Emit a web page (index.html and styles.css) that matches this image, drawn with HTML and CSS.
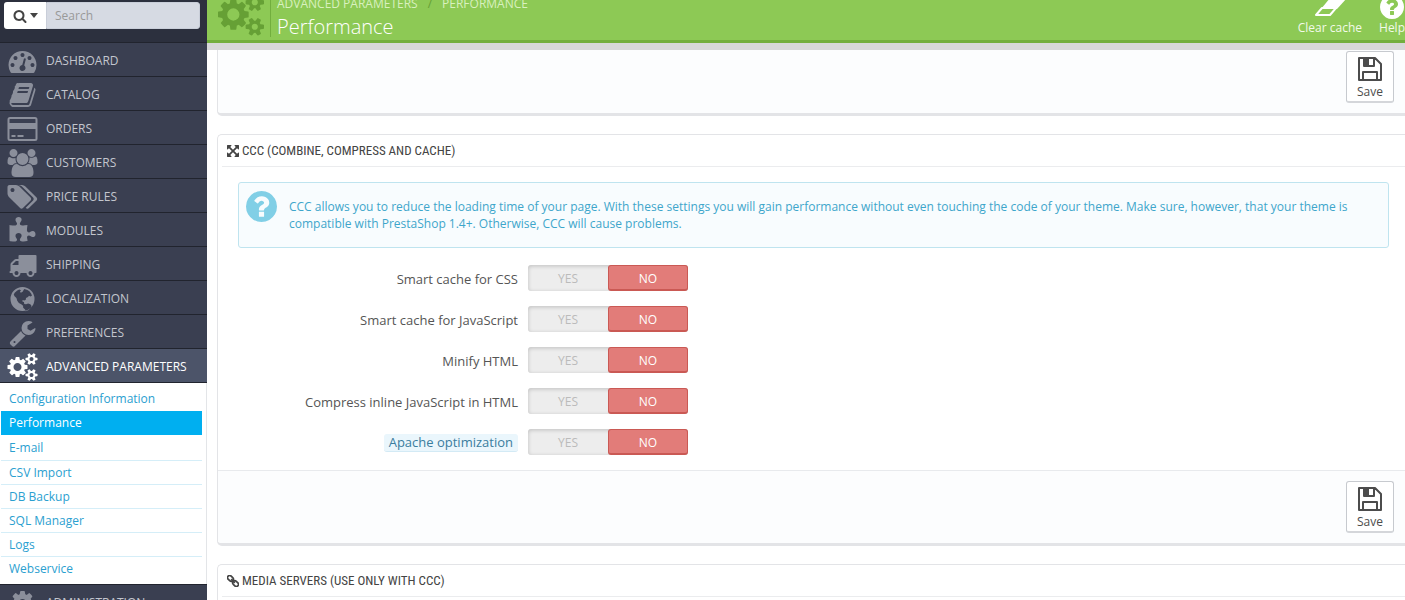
FILE: index.html
```html
<!DOCTYPE html>
<html lang="en">
<head>
<meta charset="utf-8">
<title>Performance</title>
<link rel="stylesheet" href="styles.css">
</head>
<body>
<svg class="defs" aria-hidden="true">
  <symbol id="i-search" viewBox="0 0 1792 1792"><path d="M1216 832q0-185-131.500-316.500t-316.500-131.500-316.500 131.500-131.500 316.500 131.500 316.500 316.500 131.500 316.500-131.500 131.500-316.500zm512 832q0 52-38 90t-90 38q-54 0-90-38l-343-342q-179 124-399 124-143 0-273.500-55.500t-225-150-150-225-55.500-273.500 55.500-273.500 150-225 225-150 273.500-55.500 273.500 55.500 225 150 150 225 55.500 273.500q0 220-124 399l343 343q37 37 37 90z"/></symbol>
  <symbol id="i-dash" viewBox="0 0 1792 1792"><path d="M384 1152q0-53-37.500-90.500t-90.500-37.500-90.500 37.500-37.500 90.500 37.500 90.500 90.500 37.500 90.500-37.500 37.500-90.500zm192-448q0-53-37.500-90.500t-90.500-37.500-90.500 37.500-37.500 90.500 37.500 90.500 90.500 37.500 90.500-37.500 37.500-90.500zm428 481l101-382q6-26-7.500-48.500t-38.500-29.500-48 6.500-30 39.500l-101 382q-60 5-107 43.500t-63 98.500q-20 77 20 146t117 89 146-20 89-117q16-60-6-117t-72-91zm660-33q0-53-37.500-90.500t-90.500-37.500-90.500 37.500-37.500 90.500 37.500 90.500 90.500 37.500 90.500-37.500 37.500-90.500zm-640-640q0-53-37.500-90.500t-90.500-37.500-90.500 37.500-37.500 90.500 37.500 90.500 90.500 37.500 90.500-37.500 37.500-90.500zm448 192q0-53-37.500-90.500t-90.500-37.500-90.500 37.500-37.500 90.500 37.500 90.500 90.500 37.500 90.500-37.500 37.500-90.500zm320 448q0 261-141 483-19 29-54 29h-1402q-35 0-54-29-141-221-141-483 0-182 71-348t191-286 286-191 348-71 348 71 286 191 191 286 71 348z"/></symbol>
  <symbol id="i-book" viewBox="0 0 1792 1792"><path d="M1703 478q40 57 18 129l-275 906q-19 64-76.500 107.500t-122.500 43.500h-923q-77 0-148.500-53.500t-99.500-131.500q-24-67-2-127 0-4 3-27t4-37q1-8-3-21.500t-3-19.500q2-11 8-21t16.500-23.500 16.500-23.500q23-38 45-91.500t30-91.500q3-10 .5-30t-.5-28q3-11 17-28t17-23q21-36 42-92t25-90q1-9-2.500-32t.5-28q4-13 22-30.500t22-22.500q19-26 42.500-84.500t27.500-96.500q1-8-3-25.500t-2-26.500q2-8 9-18t18-23 17-21q8-12 16.500-30.500t15-35 16-36 19.500-32 26.500-23.500 36-11.500 47.500 5.500l-1 3q38-9 51-9h761q74 0 114 56t18 130l-274 906q-36 119-71.500 153.500t-128.500 34.500h-869q-27 0-38 15-11 16-1 43 24 70 144 70h923q29 0 56-15.500t35-41.500l300-987q7-22 5-57 38 15 59 43zm-1064 2q-4 13 2 22.500t20 9.500h608q13 0 25.500-9.500t16.500-22.500l21-64q4-13-2-22.500t-20-9.500h-608q-13 0-25.500 9.500t-16.500 22.500zm-83 256q-4 13 2 22.500t20 9.500h608q13 0 25.500-9.500t16.500-22.500l21-64q4-13-2-22.500t-20-9.500h-608q-13 0-25.500 9.500t-16.500 22.500z"/></symbol>
  <symbol id="i-card" viewBox="0 0 1920 1792"><path fill-rule="evenodd" d="M160 128h1600q160 0 160 160v1216q0 160-160 160h-1600q-160 0-160-160v-1216q0-160 160-160zm0 128q-32 0-32 32v224h1664v-224q0-32-32-32zm-32 640v608q0 32 32 32h1600q32 0 32-32v-608zm128 384h256v128h-256zm384 0h384v128h-384z"/></symbol>
  <symbol id="i-users" viewBox="0 0 1920 1792"><path d="M593 896q-162 5-265 128h-134q-82 0-138-40.500t-56-118.500q0-353 124-353 6 0 43.500 21t97.500 42.500 119 21.500q67 0 133-23-5 37-5 66 0 159 81 294zm1071 637q0 120-73 189.500t-194 69.500h-874q-121 0-194-69.500t-73-189.500q0-53 3.500-103.500t14-109 26.500-108.500 43-97.500 62-81 85.500-53.500 111.500-20q10 0 43 21.500t73 48 107 48 135 21.500 135-21.500 107-48 73-48 43-21.500q61 0 111.500 20t85.500 53.500 62 81 43 97.500 26.500 108.500 14 109 3.500 103.500zm-1024-1277q0 106-75 181t-181 75-181-75-75-181 75-181 181-75 181 75 75 181zm704 384q0 159-112.500 271.500t-271.500 112.500-271.500-112.500-112.500-271.500 112.500-271.500 271.500-112.500 271.500 112.500 112.500 271.500zm576 225q0 78-56 118.500t-138 40.500h-134q-103-123-265-128 81-135 81-294 0-29-5-66 66 23 133 23 59 0 119-21.500t97.500-42.500 43.500-21q124 0 124 353zm-128-609q0 106-75 181t-181 75-181-75-75-181 75-181 181-75 181 75 75 181z"/></symbol>
  <symbol id="i-tags" viewBox="0 0 1920 1792"><path d="M448 448q0-53-37.500-90.500t-90.500-37.500-90.500 37.500-37.500 90.500 37.500 90.500 90.500 37.500 90.500-37.500 37.500-90.500zm1067 576q0 53-37 90l-491 492q-39 37-91 37-53 0-90-37l-715-716q-38-37-64.500-101t-26.500-117v-416q0-52 38-90t90-38h416q53 0 117 26.500t102 64.500l715 714q37 39 37 91zm384 0q0 53-37 90l-491 492q-39 37-91 37-36 0-59-14t-53-45l470-470q37-37 37-90 0-52-37-91l-715-714q-38-38-102-64.500t-117-26.500h224q53 0 117 26.500t102 64.500l715 714q37 39 37 91z"/></symbol>
  <symbol id="i-puzzle" viewBox="0 0 1792 1792"><path d="M1728 1098q0 81-44.500 135t-123.500 54q-41 0-77.500-17.500t-59-38-56.500-38-71-17.500q-110 0-110 124 0 39 16 115t15 115v5q-22 0-33 1-34 3-97.500 11.500t-115.500 13.500-98 5q-61 0-103-26.500t-42-83.500q0-37 17.500-71t38-56.500 38-59 17.500-77.500q0-79-54-123.500t-135-44.500q-84 0-143 45.500t-59 127.500q0 43 15 83t33.500 64.500 33.500 53 15 50.500q0 45-46 89-37 35-117 35-95 0-245-24-9-2-27.500-4t-27.500-4l-13-2q-1 0-3-1-2 0-2-1v-1024q2 1 17.500 3.500t34 5 21.500 3.500q150 24 245 24 80 0 117-35 46-44 46-89 0-22-15-50.500t-33.500-53-33.500-64.500-15-83q0-82 59-127.500t144-45.500q80 0 134 44.500t54 123.500q0 41-17.500 77.500t-38 59-38 56.500-17.500 71q0 57 42 83.500t103 26.500q64 0 180-15t163-17v2q-1 2-3.500 17.500t-5 34-3.500 21.500q-24 150-24 245 0 80 35 117 44 46 89 46 22 0 50.500-15t53-33.500 64.500-33.500 83-15q82 0 127.500 59t45.500 143z"/></symbol>
  <symbol id="i-truck" viewBox="0 0 1792 1792"><path d="M640 1408q0-52-38-90t-90-38-90 38-38 90 38 90 90 38 90-38 38-90zm-384-512h384v-256h-158q-13 0-22 9l-195 195q-9 9-9 22v30zm1280 512q0-52-38-90t-90-38-90 38-38 90 38 90 90 38 90-38 38-90zm256-1088v1024q0 15-4 26.500t-13.500 18.500-16.500 11.500-23.500 6-22.500 2-25.500 0-22.500-.5q0 106-75 181t-181 75-181-75-75-181h-384q0 106-75 181t-181 75-181-75-75-181h-64q-3 0-22.500.5t-25.500 0-22.500-2-23.500-6-16.500-11.500-13.500-18.500-4-26.500q0-26 19-45t45-19v-320q0-8-.5-35t0-38 2.500-34.500 6.500-37 14-30.500 22.500-30l198-198q19-19 50.500-32t58.500-13h160v-192q0-26 19-45t45-19h1024q26 0 45 19t19 45z"/></symbol>
  <symbol id="i-globe" viewBox="0 0 24 24"><path fill-rule="evenodd" d="M12 1.700a10.300 10.300 0 1 0 0 20.600 10.300 10.300 0 0 0 0-20.600zM13.500 3.400l2.700.8 1.700 1.200 1.600 2 .6 1.800-1.300.6-1.200-.5-.9 1-1.700.8-.2 1.500-1.200.6-1.500-.3-.2 1.200 1.300.5.3 1.700 1.600.2 1.700-.7 1.900.8 1.100 1.300-.9 1.900-2 1.800-2.200.9-.5-1.600-1.600-1.400-.1-1.800-1.600-1.300-2-1-1.400-1.900-.7-2.300-1.600-1.600-.7-1.500.8-1.400 2.200-1.900 1.700-.9 1.500.7-.9 1.200.8.800 1.500-.8.600-1.100z"/></symbol>
  <symbol id="i-wrench" viewBox="0 0 1792 1792"><path d="M448 1472q0-26-19-45t-45-19-45 19-19 45 19 45 45 19 45-19 19-45zm644-420l-682 682q-37 37-90 37-52 0-91-37l-106-108q-38-36-38-90 0-53 38-91l681-681q39 98 114.500 173.500t173.500 114.500zm634-435q0 39-23 106-47 134-164.500 217.500t-258.500 83.500q-185 0-316.500-131.500t-131.500-316.500 131.500-316.500 316.500-131.500q58 0 121.500 16.500t107.500 46.500q16 11 16 28t-16 28l-293 169v224l193 107q5-3 79-48.500t135.500-81 70.500-35.500q15 0 23.500 10t8.500 25z"/></symbol>
  <symbol id="i-cogs" viewBox="0 0 1920 1792"><path d="M896 896q0-106-75-181t-181-75-181 75-75 181 75 181 181 75 181-75 75-181zm768 512q0-52-38-90t-90-38-90 38-38 90q0 53 37.500 90.500t90.500 37.500 90.500-37.500 37.500-90.500zm0-1024q0-52-38-90t-90-38-90 38-38 90q0 53 37.500 90.500t90.500 37.500 90.500-37.500 37.500-90.500zm-384 421v185q0 10-7 19.500t-16 10.500l-155 24q-11 35-32 76 34 48 90 115 7 11 7 20 0 12-7 19-23 30-82.500 89.500t-78.500 59.500q-11 0-21-7l-115-90q-37 19-77 31-11 108-23 155-7 24-30 24h-186q-11 0-20-7.500t-10-17.500l-23-153q-34-10-75-31l-118 89q-7 7-20 7-11 0-21-8-144-133-144-160 0-9 7-19 10-14 41-53t47-61q-23-44-35-82l-152-24q-10-1-17-9.500t-7-19.500v-185q0-10 7-19.500t16-10.500l155-24q11-35 32-76-34-48-90-115-7-11-7-20 0-12 7-20 22-30 82-89t79-59q11 0 21 7l115 90q34-18 77-32 11-108 23-154 7-24 30-24h186q11 0 20 7.500t10 17.500l23 153q34 10 75 31l118-89q8-7 20-7 11 0 21 8 144 133 144 160 0 8-7 19-12 16-42 54t-45 60q23 48 34 82l152 23q10 2 17 10.500t7 19.500zm640 533v140q0 16-149 31-12 27-30 52 51 113 51 138 0 4-4 7-122 71-124 71-8 0-46-47t-52-68q-20 2-30 2t-30-2q-14 21-52 68t-46 47q-2 0-124-71-4-3-4-7 0-25 51-138-18-25-30-52-149-15-149-31v-140q0-16 149-31 13-29 30-52-51-113-51-138 0-4 4-7 4-2 35-20t59-34 30-16q8 0 46 46.500t52 67.500q20-2 30-2t30 2q51-71 92-112l6-2q4 0 124 70 4 3 4 7 0 25-51 138 17 23 30 52 149 15 149 31zm0-1024v140q0 16-149 31-12 27-30 52 51 113 51 138 0 4-4 7-122 71-124 71-8 0-46-47t-52-68q-20 2-30 2t-30-2q-14 21-52 68t-46 47q-2 0-124-71-4-3-4-7 0-25 51-138-18-25-30-52-149-15-149-31v-140q0-16 149-31 13-29 30-52-51-113-51-138 0-4 4-7 4-2 35-20t59-34 30-16q8 0 46 46.500t52 67.500q20-2 30-2t30 2q51-71 92-112l6-2q4 0 124 70 4 3 4 7 0 25-51 138 17 23 30 52 149 15 149 31z"/></symbol>
  <symbol id="i-cog" viewBox="0 0 1792 1792"><path d="M1152 896q0-106-75-181t-181-75-181 75-75 181 75 181 181 75 181-75 75-181zm512-109v222q0 12-8 23t-20 13l-185 28q-19 54-39 91 35 50 107 138 10 12 10 25t-9 23q-27 37-99 108t-94 71q-12 0-26-9l-138-108q-44 23-91 38-16 136-29 186-7 28-36 28h-222q-14 0-24.500-8.500t-11.500-21.500l-28-184q-49-16-90-37l-141 107q-10 9-25 9-14 0-25-11-126-114-165-168-7-10-7-23 0-12 8-23 15-21 51-66.500t54-70.500q-27-50-41-99l-183-27q-13-2-21-12.500t-8-23.500v-222q0-12 8-23t19-13l186-28q14-46 39-92-40-57-107-138-10-12-10-24 0-10 9-23 26-36 98.500-107.500t94.500-71.500q13 0 26 10l138 107q44-23 91-38 16-136 29-186 7-28 36-28h222q14 0 24.500 8.500t11.500 21.500l28 184q49 16 90 37l142-107q9-9 24-9 13 0 25 10 129 119 165 170 7 8 7 22 0 12-8 23-15 21-51 66.500t-54 70.500q26 50 41 98l183 28q13 2 21 12.500t8 23.500z"/></symbol>
  <symbol id="i-help" viewBox="128 128 1536 1536"><path d="M1024 1376v-192q0-14-9-23t-23-9h-192q-14 0-23 9t-9 23v192q0 14 9 23t23 9h192q14 0 23-9t9-23zm256-672q0-88-55.500-163t-138.500-116-170-41q-243 0-371 213-15 24 8 42l132 100q7 6 19 6 16 0 25-12 53-68 86-92 34-24 86-24 48 0 85.500 26t37.500 59q0 38-20 61t-68 45q-63 28-115.500 86.500t-52.500 125.500v36q0 14 9 23t23 9h192q14 0 23-9t9-23q0-19 21.500-49.500t54.500-49.500q32-18 49-28.500t46-35 44.500-48 28-60.500 12.500-81zm384 192q0 209-103 385.500t-279.500 279.500-385.500 103-385.500-103-279.500-279.500-103-385.500 103-385.500 279.500-279.500 385.500-103 385.500 103 279.500 279.500 103 385.500z"/></symbol>
  <symbol id="i-expand" viewBox="128 128 1536 1536"><path d="M1411 541l-355 355 355 355 144-144q29-31 70-14 39 17 39 59v448q0 26-19 45t-45 19h-448q-42 0-59-40-17-39 14-69l144-144-355-355-355 355 144 144q31 30 14 69-17 40-59 40h-448q-26 0-45-19t-19-45v-448q0-42 40-59 39-17 69 14l144 144 355-355-355-355-144 144q-19 19-45 19-12 0-24-5-40-17-40-59v-448q0-26 19-45t45-19h448q42 0 59 40 17 39-14 69l-144 144 355 355 355-355-144-144q-31-30-14-69 17-40 59-40h448q26 0 45 19t19 45v448q0 42-39 59-13 5-25 5-26 0-45-19z"/></symbol>
  <symbol id="i-link" viewBox="0 0 14 14"><g fill="none" stroke="currentColor" stroke-width="2" transform="rotate(45 7 7)"><rect x="-1" y="4.500" width="7.500" height="5" rx="2.500"/><rect x="7.500" y="4.500" width="7.500" height="5" rx="2.500"/><path d="M4 7h6"/></g></symbol>
  <symbol id="i-save" viewBox="0 0 24 24"><path fill="none" stroke="currentColor" stroke-width="2" stroke-linejoin="round" d="M1 1h16l6 6v16H1zM6 1v8h10V1M5 23v-8h14v8"/><path d="M5 1h6v8H5z"/></symbol>
  <symbol id="i-eraser" viewBox="0 0 36 26"><path fill="none" stroke="currentColor" stroke-width="2" stroke-linejoin="round" d="M4 24l6-7h14l-6 7z"/><path d="M9 18L23 1h12v6L25 18z"/></symbol>
</svg>
<div class="app">
  <aside class="sidebar">
    <form class="search">
      <button class="search-type" type="button" aria-label="Search scope"><svg class="glass"><use href="#i-search"/></svg><span class="caret"></span></button>
      <input class="search-input" type="search" placeholder="Search" aria-label="Search">
    </form>
    <nav class="menu">
      <a class="item" href="#"><svg class="nav-icon"><use href="#i-dash"/></svg>DASHBOARD</a>
      <a class="item" href="#"><svg class="nav-icon"><use href="#i-book"/></svg>CATALOG</a>
      <a class="item" href="#"><svg class="nav-icon"><use href="#i-card"/></svg>ORDERS</a>
      <a class="item" href="#"><svg class="nav-icon"><use href="#i-users"/></svg>CUSTOMERS</a>
      <a class="item" href="#"><svg class="nav-icon"><use href="#i-tags"/></svg>PRICE RULES</a>
      <a class="item" href="#"><svg class="nav-icon"><use href="#i-puzzle"/></svg>MODULES</a>
      <a class="item" href="#"><svg class="nav-icon"><use href="#i-truck"/></svg>SHIPPING</a>
      <a class="item" href="#"><svg class="nav-icon"><use href="#i-globe"/></svg>LOCALIZATION</a>
      <a class="item" href="#"><svg class="nav-icon"><use href="#i-wrench"/></svg>PREFERENCES</a>
      <a class="item current" href="#"><svg class="nav-icon"><use href="#i-cogs"/></svg>ADVANCED PARAMETERS</a>
      <div class="submenu">
        <a class="sub" href="#">Configuration Information</a>
        <a class="sub selected" href="#">Performance</a>
        <a class="sub" href="#">E-mail</a>
        <a class="sub" href="#">CSV Import</a>
        <a class="sub" href="#">DB Backup</a>
        <a class="sub" href="#">SQL Manager</a>
        <a class="sub" href="#">Logs</a>
        <a class="sub" href="#">Webservice</a>
      </div>
      <a class="item" href="#"><svg class="nav-icon"><use href="#i-cog"/></svg>ADMINISTRATION</a>
    </nav>
  </aside>
  <div class="page">
    <header class="header">
      <svg class="page-icon"><use href="#i-cogs"/></svg>
      <div class="titles">
        <div class="crumbs"><span>ADVANCED PARAMETERS</span><span class="slash">/</span><span>PERFORMANCE</span></div>
        <h1 class="title">Performance</h1>
      </div>
      <div class="tools">
        <a class="tool" href="#"><svg class="eraser"><use href="#i-eraser"/></svg>Clear cache</a>
        <a class="tool" href="#"><svg class="help"><use href="#i-help"/></svg>Help</a>
      </div>
    </header>
    <main class="content">
      <section class="panel panel-first">
        <div class="panel-footer"><button class="save" type="button"><svg class="save-icon"><use href="#i-save"/></svg>Save</button></div>
      </section>
      <section class="panel">
        <h2 class="panel-heading"><svg class="head-icon"><use href="#i-expand"/></svg>CCC (COMBINE, COMPRESS AND CACHE)</h2>
        <div class="panel-body">
          <div class="alert">
            <svg class="alert-icon"><use href="#i-help"/></svg>
            <p class="alert-text">CCC allows you to reduce the loading time of your page. With these settings you will gain performance without even touching the code of your theme. Make sure, however, that your theme is compatible with PrestaShop 1.4+. Otherwise, CCC will cause problems.</p>
          </div>
          <div class="row" role="radiogroup" aria-labelledby="l1">
            <span class="label" id="l1">Smart cache for CSS</span>
            <div class="switch"><input type="radio" name="css" id="css1"><label for="css1">YES</label><input type="radio" name="css" id="css0" checked><label for="css0">NO</label></div>
          </div>
          <div class="row" role="radiogroup" aria-labelledby="l2">
            <span class="label" id="l2">Smart cache for JavaScript</span>
            <div class="switch"><input type="radio" name="js" id="js1"><label for="js1">YES</label><input type="radio" name="js" id="js0" checked><label for="js0">NO</label></div>
          </div>
          <div class="row" role="radiogroup" aria-labelledby="l3">
            <span class="label" id="l3">Minify HTML</span>
            <div class="switch"><input type="radio" name="html" id="html1"><label for="html1">YES</label><input type="radio" name="html" id="html0" checked><label for="html0">NO</label></div>
          </div>
          <div class="row" role="radiogroup" aria-labelledby="l4">
            <span class="label" id="l4">Compress inline JavaScript in HTML</span>
            <div class="switch"><input type="radio" name="inline" id="inline1"><label for="inline1">YES</label><input type="radio" name="inline" id="inline0" checked><label for="inline0">NO</label></div>
          </div>
          <div class="row" role="radiogroup" aria-labelledby="l5">
            <span class="label"><span class="hint" id="l5">Apache optimization</span></span>
            <div class="switch"><input type="radio" name="apache" id="apache1"><label for="apache1">YES</label><input type="radio" name="apache" id="apache0" checked><label for="apache0">NO</label></div>
          </div>
        </div>
        <div class="panel-footer"><button class="save" type="button"><svg class="save-icon"><use href="#i-save"/></svg>Save</button></div>
      </section>
      <section class="panel">
        <h2 class="panel-heading"><svg class="head-icon"><use href="#i-link"/></svg>MEDIA SERVERS (USE ONLY WITH CCC)</h2>
        <div class="panel-body"></div>
      </section>
    </main>
  </div>
</div>
</body>
</html>
```
FILE: styles.css
```css
* { box-sizing: border-box; }

body {
  margin: 0;
  font: 12px/17px "Open Sans", sans-serif;
  color: #555;
  background: #fff;
}

a { text-decoration: none; }
svg { display: block; flex: none; fill: currentColor; }
.defs { display: none; }

.app {
  display: flex;
  height: 100vh;
  overflow: hidden;
}

/* Sidebar */
.sidebar {
  flex: none;
  width: 207px;
  background: #3a3f51;
}

.search {
  display: flex;
  height: 42px;
  padding: 2px 7px 13px 4px;
  background: #2c303e;
}

.search-type {
  display: flex;
  align-items: center;
  justify-content: center;
  gap: 3px;
  width: 42px;
  padding: 0;
  border: 0;
  border-radius: 3px 0 0 3px;
  background: #fff;
  color: #444;
}

.glass { width: 14px; height: 14px; }

.caret {
  border: 4px solid transparent;
  border-top: 5px solid #444;
  border-bottom: 0;
}

.search-input {
  flex: 1;
  min-width: 0;
  padding: 0 8px;
  border: 1px solid #c9ced9;
  border-radius: 0 3px 3px 0;
  background: #d6dae3;
  font: inherit;
}

.search-input::placeholder { color: #999; }

.item {
  display: flex;
  align-items: center;
  gap: 8px;
  height: 34px;
  padding: 2px 0 0 7px;
  border-top: 1px solid #21242e;
  color: #c3c6ce;
}

.nav-icon {
  width: 31px;
  height: 28px;
  color: #8b8f9b;
}

.current {
  height: 35px;
  border-bottom: 1px solid #21242e;
  background: #4c5469;
  color: #fff;
}

.current .nav-icon { color: #fff; }

.submenu {
  padding: 4px 4px 3px 1px;
  border-right: 1px solid #e3e5e8;
  background: #fff;
}

.sub {
  display: block;
  height: 24px;
  padding: 3px 8px;
  border-bottom: 1px solid #d5eef8;
  color: #2ba0d0;
}

.sub:first-child, .sub:last-child { border-bottom-color: transparent; }

.selected {
  margin-bottom: 1px;
  border-bottom: 0;
  background: #00aff0;
  color: #fff;
}

.selected + .sub { height: 25px; }

/* Page header */
.page {
  flex: 1;
  min-width: 0;
}

.header {
  display: flex;
  align-items: flex-end;
  height: 50px;
  overflow: hidden;
  border-bottom: 7px solid #d6d7d9;
  box-shadow: inset 0 -3px #72ae3e;
  background: #8dc955;
  color: #fff;
}

.page-icon {
  width: 46px;
  height: 43px;
  margin: 0 6px 7px 11px;
  color: #66a035;
}

.titles {
  padding-left: 6px;
  margin-bottom: 6px;
  border-left: 1px solid #72ae3e;
}

.crumbs {
  display: flex;
  gap: 10px;
  color: #d8f0bf;
}

.slash { color: #66a035; }

.title {
  margin: 0;
  padding-top: 5px;
  font-size: 20px;
  line-height: 20px;
  font-weight: 300;
}

.tools {
  display: flex;
  align-items: flex-end;
  gap: 17px;
  margin-left: auto;
  padding-bottom: 7px;
}

.tool {
  display: flex;
  flex-direction: column;
  align-items: center;
  color: #f2fae9;
}

.eraser { width: 36px; height: 26px; margin-bottom: 2px; color: #fff; }
.help { width: 24px; height: 24px; color: #fff; }

/* Panels */
.content { padding-left: 10px; }

.panel {
  margin-bottom: 18px;
  border: 1px solid #e3e4e7;
  border-width: 1px 0 3px 1px;
  border-radius: 5px 0 0 5px;
}

.panel-first {
  border-top: 0;
  border-top-left-radius: 0;
}

.panel-heading {
  display: flex;
  align-items: center;
  gap: 3px;
  height: 32px;
  margin: 0 0 0 4px;
  padding-left: 5px;
  border-bottom: 1px solid #ebecee;
  font: 400 13px/20px "Ubuntu Condensed", "Roboto Condensed", "Open Sans Condensed", sans-serif;
  color: #444;
}

.head-icon { width: 12px; height: 12px; }

.panel-body { padding: 15px 16px 15px 20px; }

.alert {
  display: flex;
  gap: 12px;
  min-height: 66px;
  margin-bottom: 17px;
  padding: 8px 7px;
  border: 1px solid #bfe4ef;
  border-radius: 3px;
  background: #f8fcfe;
  color: #3ea6cb;
}

.alert-icon { width: 31px; height: 31px; color: #81cfe6; }
.alert-text { margin: 7px 24px 0 0; }

.row {
  display: grid;
  grid-template-columns: 280px 160px;
  gap: 10px;
  align-items: center;
  margin-bottom: 15px;
}

.row:last-child { margin-bottom: 0; }

.label {
  padding-top: 2px;
  text-align: right;
  font-size: 13px;
}

.hint {
  display: inline-block;
  padding: 0 5px;
  border-bottom: 1px solid #d3eaf5;
  border-radius: 3px;
  background: #eaf6fc;
  color: #3a7d9e;
}

.switch {
  position: relative;
  display: flex;
  height: 26px;
  border-radius: 3px;
  background: #ededed;
  box-shadow: inset 0 1px 4px rgba(0, 0, 0, .2);
}

.switch input {
  position: absolute;
  opacity: 0;
}

.switch label {
  flex: 1;
  border: 1px solid transparent;
  color: #bbb;
  line-height: 25px;
  text-align: center;
}

.switch input:checked + label {
  border-color: #ca5954;
  border-bottom-width: 2px;
  border-radius: 3px;
  background: #e27c79;
  color: #fff;
}

.panel-footer {
  display: flex;
  justify-content: flex-end;
  height: 73px;
  padding: 10px 11px 0 0;
  border-top: 1px solid #e8eaed;
  border-radius: 0 0 0 4px;
  background: #fcfdfe;
}

.panel-first .panel-footer {
  height: 63px;
  padding-top: 1px;
  border-top: 0;
}

.save {
  display: flex;
  flex-direction: column;
  align-items: center;
  gap: 2px;
  width: 48px;
  height: 52px;
  padding: 5px 0 0;
  border: 1px solid #c7cacf;
  border-bottom: 2px solid #d4d6da;
  border-radius: 3px;
  background: #fff;
  color: #4c4c4c;
  font: inherit;
}

.save-icon { width: 24px; height: 24px; }
```
